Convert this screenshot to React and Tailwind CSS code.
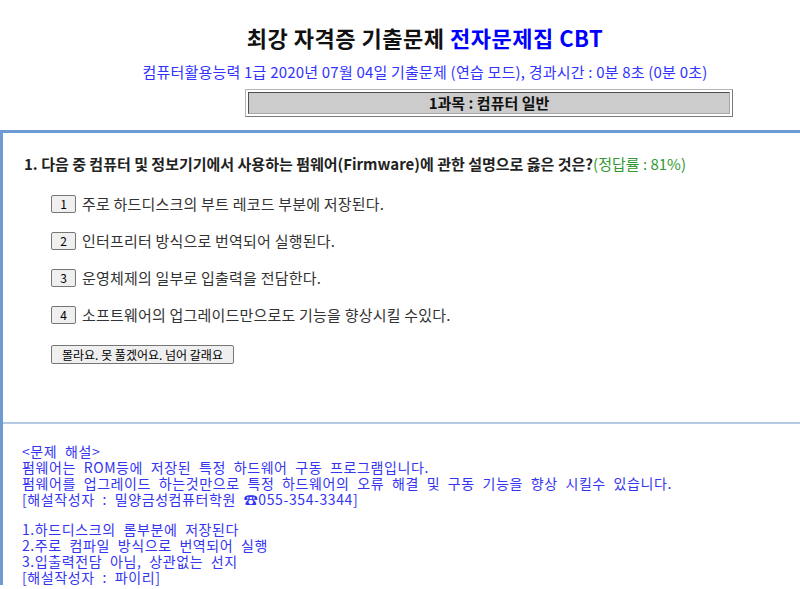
const sans = { fontFamily: '"Noto Sans CJK KR", "Noto Sans", sans-serif' };

const options = [
    "주로 하드디스크의 부트 레코드 부분에 저장된다.",
    "인터프리터 방식으로 번역되어 실행된다.",
    "운영체제의 일부로 입출력을 전담한다.",
    "소프트웨어의 업그레이드만으로도 기능을 향상시킬 수있다.",
];

const explain = [
    "<문제 해설>",
    "펌웨어는 ROM등에 저장된 특정 하드웨어 구동 프로그램입니다.",
    "펌웨어를 업그레이드 하는것만으로 특정 하드웨어의 오류 해결 및 구동 기능을 향상 시킬수 있습니다.",
    "[해설작성자 : 밀양금성컴퓨터학원 ☎055-354-3344]",
    "",
    "1.하드디스크의 롬부분에 저장된다",
    "2.주로 컴파일 방식으로 번역되어 실행",
    "3.입출력전담 아님, 상관없는 선지",
    "[해설작성자 : 파이리]",
];

export default function App() {
    return (
        <div className="w-[800px] h-[589px] overflow-hidden bg-white" style={sans}>

            {/* header */}
            <div className="pt-[23px] pl-[50px] flex flex-col items-center">
                <h1 className="text-[22px] leading-[28px] tracking-[0.5px] font-bold text-[#111]">
                    최강 자격증 기출문제 <span className="text-[#0000ff]">전자문제집 CBT</span>
                </h1>
                <p className="mt-[11px] text-[15px] leading-[20px] tracking-[0.2px] text-[#3333ff]">
                    컴퓨터활용능력 1급 2020년 07월 04일 기출문제 (연습 모드), 경과시간 : 0분 8초 (0분 0초)
                </p>
            </div>

            {/* subject bar */}
            <div className="mt-[7px] ml-[245px] w-[488px] h-[28px] border border-t-[#b4b4b4] border-l-[#b4b4b4] border-r-[#7a7a7a] border-b-[#7a7a7a] p-[2px]">
                <div className="h-full bg-[#cccccc] border border-t-[#505050] border-l-[#505050] border-r-[#a8a8a8] border-b-[#a8a8a8] flex items-center justify-center text-[15px] font-bold text-[#111]">
                    1과목 : 컴퓨터 일반
                </div>
            </div>

            {/* main box */}
            <div className="mt-[13px] w-[820px] border-t-[3px] border-l-[3px] border-[#6e9bd3]">
                <div className="h-[289px] pl-[21px] pt-[21px]">
                    <p className="text-[15px] leading-[20px] font-bold text-[#222]">
                        1. 다음 중 컴퓨터 및 정보기기에서 사용하는 펌웨어(Firmware)에 관한 설명으로 옳은 것은?
                        <span className="font-normal text-[#339933]">(정답률 : 81%)</span>
                    </p>

                    <div className="mt-[21px] ml-[27px] flex flex-col gap-[19px]">
                        {options.map((t, i) => (
                            <div key={i} className="flex items-center gap-[6px] h-[18px]">
                                <button className="w-[25px] h-[18px] bg-[#efefef] border border-[#767676] rounded-[2px] text-[12px] leading-none text-black">
                                    {i + 1}
                                </button>
                                <span className="text-[15px] tracking-[0.2px] text-[#333]">{t}</span>
                            </div>
                        ))}
                    </div>

                    <button className="mt-[21px] ml-[27px] h-[19px] px-[10px] bg-[#efefef] border border-[#767676] rounded-[2px] text-[12px] leading-none text-black">
                        몰라요. 못 풀겠어요. 넘어 갈래요
                    </button>
                </div>

                {/* explanation */}
                <div className="border-t-2 border-[#b6cbe3] pl-[19px] pt-[19px]">
                    {explain.map((line, i) =>
                        line === "" ? (
                            <div key={i} className="h-[14px]" />
                        ) : (
                            <div key={i} className="h-[16px] text-[14px] leading-[16px] tracking-[0.6px] [word-spacing:4px] text-[#3535f0] whitespace-pre">
                                {line}
                            </div>
                        )
                    )}
                </div>
            </div>
        </div>
    );
}
